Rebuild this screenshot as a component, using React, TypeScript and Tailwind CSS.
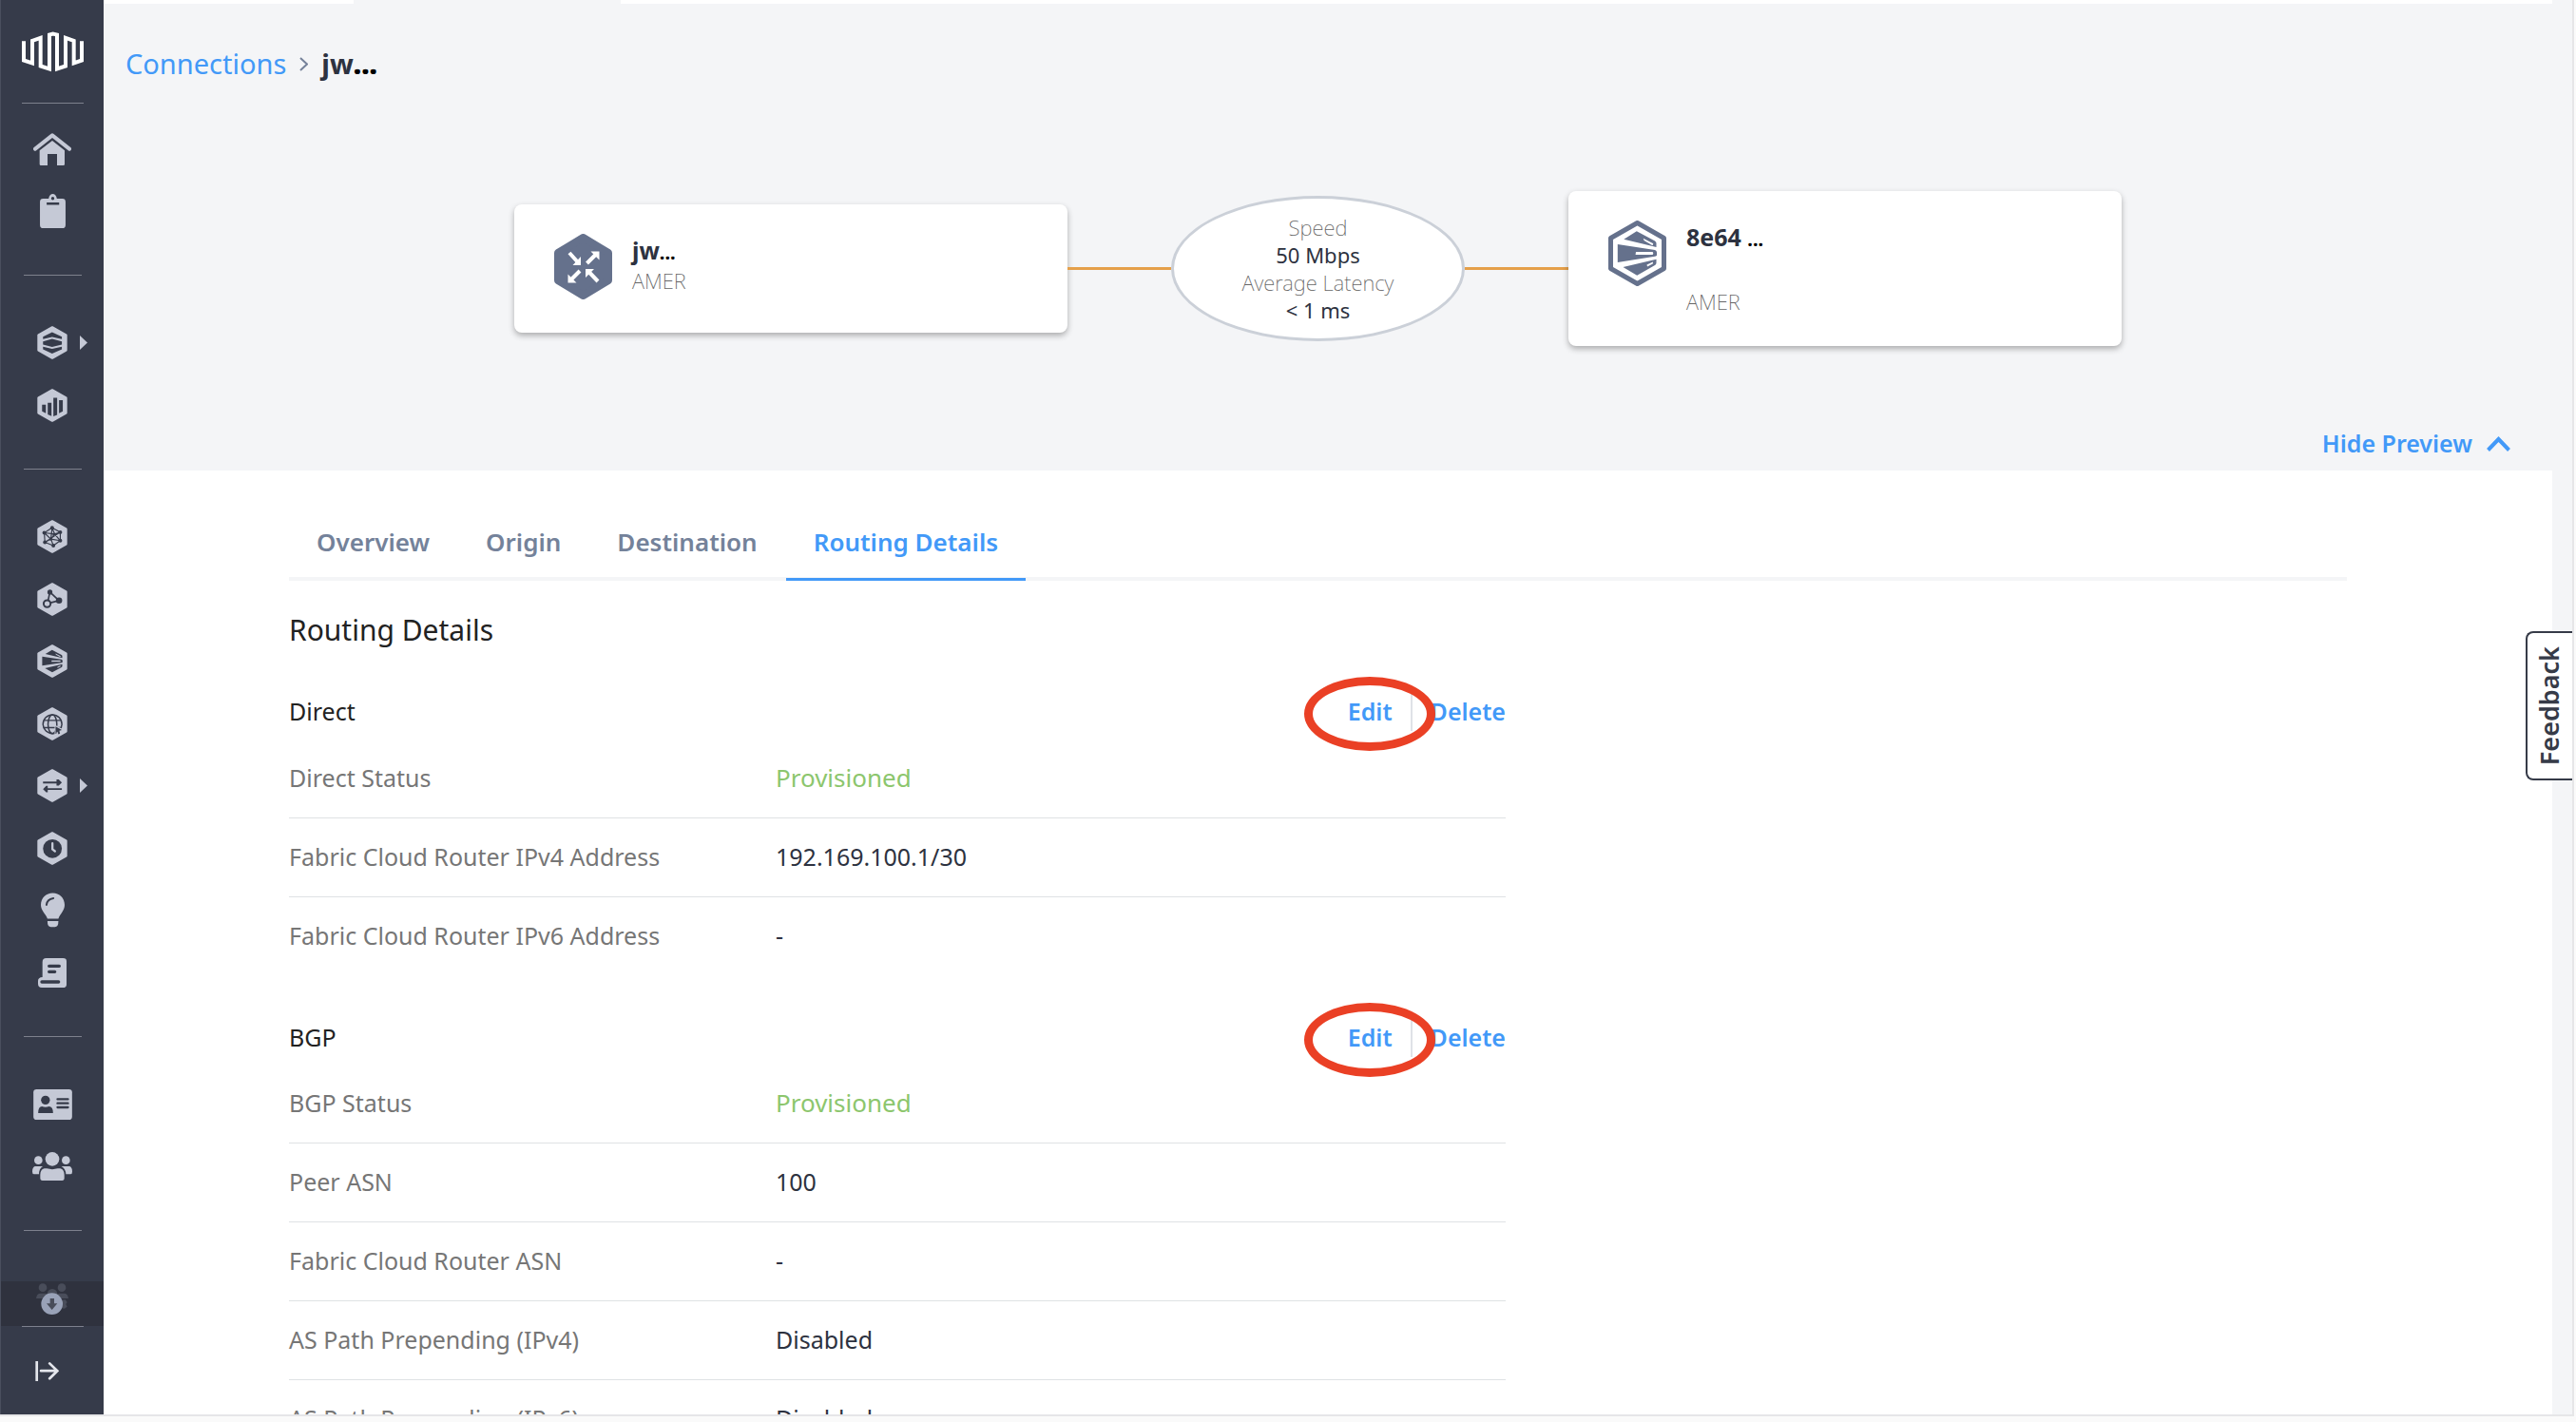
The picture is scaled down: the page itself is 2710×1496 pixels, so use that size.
import { useState } from "react";
import type { ReactNode } from "react";

interface DetailRow {
  label: string;
  value: string;
  success?: boolean;
}

interface DetailSectionProps {
  title: string;
  rows: DetailRow[];
}

interface NavItem {
  label: string;
  icon: ReactNode;
  hasMenu?: boolean;
}

const TABS = ["Overview", "Origin", "Destination", "Routing Details"];

const DIRECT_ROWS: DetailRow[] = [
  { label: "Direct Status", value: "Provisioned", success: true },
  { label: "Fabric Cloud Router IPv4 Address", value: "192.169.100.1/30" },
  { label: "Fabric Cloud Router IPv6 Address", value: "-" },
];

const BGP_ROWS: DetailRow[] = [
  { label: "BGP Status", value: "Provisioned", success: true },
  { label: "Peer ASN", value: "100" },
  { label: "Fabric Cloud Router ASN", value: "-" },
  { label: "AS Path Prepending (IPv4)", value: "Disabled" },
  { label: "AS Path Prepending (IPv6)", value: "Disabled" },
];

function Logo() {
  return (
    <svg viewBox="0 0 195 128" className="w-[65px] h-[43px]" fill="none" stroke="#fff" strokeWidth="12">
      <path d="M6 30V91L33 100V29L59 20V109L87 118V10L98 7L111 10V118L138 109V20L164 29V100L189 91V30" />
    </svg>
  );
}

// Light hexagon with a dark symbol cut into it
function HexIcon({ children }: { children: ReactNode }) {
  return (
    <svg viewBox="0 0 95 106" className="w-8 h-[35px]" fill="#363b4a" stroke="none">
      <polygon
        points="47.5,4 91.5,29 91.5,77 47.5,102 3.5,77 3.5,29"
        fill="#c5c9d6"
        stroke="#c5c9d6"
        strokeWidth="7"
        strokeLinejoin="round"
      />
      {children}
    </svg>
  );
}

function EdgeShapes() {
  return (
    <path
      fillRule="evenodd"
      d="M16.3 19.7L29.8 11.3L49 21.5Q50.5 22.5 50.5 24V28ZM36.7 18.7L37.6 21L46.5 26.3L47.3 24.3ZM9.8 25L49 31Q51 31.5 51 33.5V36.5Q51 37.5 49 37.8L9.8 44ZM29 33L28.6 36H46.5Q48 34.5 46.5 33ZM15.5 49L50.5 40.7V44.5Q50.5 46 49 47L30.2 57.7ZM40.5 46.5L41 48.6L46.8 45.6L47 43.4Z"
    />
  );
}

const HOME = (
  <svg viewBox="0 0 120 102" className="w-10 h-[34px]" fill="#c5c9d6">
    <path d="M6 50L60 7L114 50" fill="none" stroke="#c5c9d6" strokeWidth="12" strokeLinecap="round" strokeLinejoin="round" />
    <path d="M20 55L60 24L99 55V98Q99 102 95 102H75V66H45V102H24Q20 102 20 98Z" />
  </svg>
);

const CLIPBOARD = (
  <svg viewBox="0 0 80 107" className="w-[27px] h-9" fill="#c5c9d6">
    <path
      fillRule="evenodd"
      d="M10 15H27C29 5 34 0 40 0S51 5 53 15H70Q80 15 80 25V97Q80 107 70 107H10Q0 107 0 97V25Q0 15 10 15ZM35 14A5 5 0 1 0 45 14A5 5 0 1 0 35 14ZM21 27V34H60V27Z"
    />
  </svg>
);

const BULB = (
  <svg viewBox="0 0 76 110" className="w-[25px] h-[37px]" fill="#c5c9d6">
    <path d="M38 0C59 0 76 16 76 38C76 56 62 66 56 82H21C15 66 0 56 0 38C0 16 17 0 38 0Z" />
    <path d="M21 90H56Q56 109 45 109H32Q21 109 21 90Z" />
    <path d="M18 38Q20 20 40 17" fill="none" stroke="#363b4a" strokeWidth="6" strokeLinecap="round" />
  </svg>
);

const SCROLL = (
  <svg viewBox="0 0 90 93" className="w-[30px] h-[31px]" fill="#c5c9d6">
    <path d="M26 0H79Q90 0 90 10V83Q90 93 78 93H12Q0 93 0 80V72Q0 61 14 60V12Q14 0 26 0Z" />
    <path d="M35 25H67M35 43H53M12 75H65" fill="none" stroke="#363b4a" strokeWidth="10" strokeLinecap="round" />
  </svg>
);

const ID_CARD = (
  <svg viewBox="0 0 122 96" className="w-[41px] h-8" fill="#363b4a">
    <rect width="122" height="96" rx="10" fill="#c5c9d6" />
    <circle cx="38" cy="34" r="14" />
    <path d="M15 75Q15 54 27 54Q38 59 49 54Q62 54 62 75Z" />
    <path d="M76 31H109M76 44H109M76 57H109" stroke="#363b4a" strokeWidth="7" strokeLinecap="round" />
  </svg>
);

const USERS = (
  <svg viewBox="0 0 126 90" className="w-[42px] h-[30px]" fill="#c5c9d6">
    <circle cx="63" cy="22" r="22" />
    <circle cx="19" cy="26" r="13" />
    <circle cx="106" cy="26" r="13" />
    <path d="M38 52H46Q63 57 80 52H88Q101 55 101 72V82Q101 90 94 90H32Q25 90 25 82V72Q25 55 38 52Z" />
    <path d="M8 45H33Q21 52 21 70H6Q0 70 0 62Q0 48 8 45Z" />
    <path d="M118 45H92Q105 52 106 70H120Q126 70 126 62Q126 48 118 45Z" />
  </svg>
);

const NAV_GROUPS: { className: string; items: NavItem[] }[] = [
  {
    className: "h-[131px] mt-[15px]",
    items: [
      { label: "Home", icon: HOME },
      { label: "Orders", icon: CLIPBOARD },
    ],
  },
  {
    className: "h-[131px] mt-[38px]",
    items: [
      {
        label: "Data centers",
        hasMenu: true,
        icon: (
          <HexIcon>
            <path d="M18 34L47 20L78 34V42L47 35L18 42ZM18 49L47 41L78 49V59L47 67L18 59ZM18 66L47 73L78 66V74L47 88L18 74Z" />
          </HexIcon>
        ),
      },
      {
        label: "Insights",
        icon: (
          <HexIcon>
            <path d="M15 51H27V78L15 72ZM33 45H45V87L33 82ZM51 29H63V83L51 88ZM69 36H81V72L69 78Z" />
          </HexIcon>
        ),
      },
    ],
  },
  {
    className: "h-[524px] mt-[38px]",
    items: [
      {
        label: "Fabric",
        icon: (
          <HexIcon>
            <path
              d="M47 25L73 39V66L51 82L24 71L22 41ZM22 41L55 45L73 39M47 25L55 45L73 66L43 61L22 41M55 45L43 61L24 71M43 61L51 82M47 25L43 61M24 71L73 39"
              fill="none"
              stroke="#363b4a"
              strokeWidth="3.5"
            />
            <circle cx="47" cy="25" r="6" />
            <circle cx="73" cy="39" r="6" />
            <circle cx="73" cy="66" r="6" />
            <circle cx="51" cy="82" r="6" />
            <circle cx="24" cy="71" r="6" />
            <circle cx="22" cy="41" r="6" />
            <circle cx="54" cy="46" r="5" />
            <circle cx="43" cy="61" r="5" />
          </HexIcon>
        ),
      },
      {
        label: "Connections",
        icon: (
          <HexIcon>
            <path d="M40 30L34 57M40 30L69 57L42 64" fill="none" stroke="#363b4a" strokeWidth="5" />
            <circle cx="40" cy="30" r="8" />
            <circle cx="69" cy="57" r="10" />
            <circle cx="31" cy="67" r="11" fill="#c5c9d6" stroke="#363b4a" strokeWidth="6" />
          </HexIcon>
        ),
      },
      {
        label: "Network Edge",
        icon: (
          <HexIcon>
            <g transform="scale(1.57 1.54)">
              <EdgeShapes />
            </g>
          </HexIcon>
        ),
      },
      {
        label: "Internet Access",
        icon: (
          <HexIcon>
            <g fill="none" stroke="#363b4a" strokeWidth="4.5">
              <circle cx="48" cy="54" r="30" />
              <ellipse cx="48" cy="54" rx="14" ry="30" />
              <path d="M20 42H76M20 65H76" />
            </g>
            <path d="M55 56L81 70L73 74L77 86L66 89L61 80L55 86Z" fill="#c5c9d6" />
            <path d="M58 61L78 73L70 75L72 84L67 86L64 78L58 83Z" />
          </HexIcon>
        ),
      },
      {
        label: "Transfers",
        hasMenu: true,
        icon: (
          <HexIcon>
            <path d="M18 40H61V33H68L78 43L68 53H61V46H18ZM78 61H33V54H28L18 64L28 74H33V67H78Z" />
          </HexIcon>
        ),
      },
      {
        label: "Time",
        icon: (
          <HexIcon>
            <circle cx="48" cy="54" r="30" />
            <path d="M48 37V56L56 62" fill="none" stroke="#c5c9d6" strokeWidth="7" strokeLinecap="round" />
          </HexIcon>
        ),
      },
      { label: "Ideas", icon: BULB },
      { label: "Reports", icon: SCROLL },
    ],
  },
  {
    className: "h-[131px] mt-[38px]",
    items: [
      { label: "Account", icon: ID_CARD },
      { label: "Users", icon: USERS },
    ],
  },
];

function Sidebar() {
  return (
    <aside className="w-[109px] shrink-0 flex flex-col items-center bg-[#363b4a] border-l border-[#4a4f5e] overflow-hidden">
      <div className="h-[108px] w-full shrink-0 flex items-center justify-center">
        <Logo />
      </div>
      <hr className="w-[65px] border-[#7e818d]" />
      {NAV_GROUPS.map((group, index) => (
        <div key={index} className="w-full shrink-0 flex flex-col items-center">
          <nav className={"w-full grid auto-rows-fr " + group.className}>
            {group.items.map((item) => (
              <button key={item.label} type="button" aria-label={item.label} className="relative flex items-center justify-center">
                {item.icon}
                {item.hasMenu && (
                  <svg viewBox="0 0 8 15" className="absolute left-[83px] w-2 h-[15px]" fill="#c5c9d6">
                    <path d="M0 0L8 7.5L0 15Z" />
                  </svg>
                )}
              </button>
            ))}
          </nav>
          <hr className="w-[61px] mt-[34px] border-[#7e818d]" />
        </div>
      ))}
      <div className="mt-auto w-full shrink-0 flex flex-col items-center">
        <button type="button" aria-label="Scroll down" className="w-full h-[47px] flex justify-center bg-[#2f323e]">
          <svg viewBox="0 0 102 141" className="w-[34px] h-[47px]">
            <g fill="#494d5a">
              <circle cx="21" cy="20" r="13" />
              <circle cx="81" cy="20" r="13" />
              <circle cx="51" cy="40" r="16" />
              <path d="M0 54Q2 38 14 38H30Q38 42 32 54ZM102 54Q100 38 88 38H72Q64 42 70 54Z" />
              <path d="M76 60L92 58L98 66L94 72L98 80L90 86L76 84Z" />
            </g>
            <circle cx="50" cy="71" r="34" fill="#99a2b8" />
            <path d="M44 54H57V70H67L50 90L33 70H44Z" fill="#494d5a" />
          </svg>
        </button>
        <hr className="w-[65px] border-[#7e818d]" />
        <button type="button" aria-label="Expand menu" className="h-[92px] w-full flex items-center pl-9">
          <svg viewBox="0 0 74 62" className="w-[25px] h-[21px]" fill="none" stroke="#e4e6ec" strokeWidth="8">
            <path d="M5 0V62" />
            <path d="M18 30H68M45 7L69 30L45 54" strokeLinecap="round" />
          </svg>
        </button>
      </div>
    </aside>
  );
}

function DetailSection({ title, rows }: DetailSectionProps) {
  return (
    <section className="mt-[45px] max-w-7xl">
      <div className="flex items-center justify-between h-10 mb-2">
        <h3 className="text-[25px] text-[#222]">{title}</h3>
        <div className="flex items-center font-semibold text-[25px] text-[#4299f8]">
          <div className="relative">
            <button type="button">Edit</button>
            <span className="absolute z-10 -left-[46px] -top-[18px] w-[138px] h-[78px] rounded-[50%] border-[9px] border-[#ea4025] pointer-events-none"></span>
          </div>
          <span className="w-0.5 h-10 mx-[19px] bg-[#dfe2e7]"></span>
          <button type="button">Delete</button>
        </div>
      </div>
      <table className="w-full table-fixed text-[25px] text-left">
        <tbody>
          {rows.map((row) => (
            <tr key={row.label} className="h-[83px] border-b border-[#dfe2e4] last:border-transparent">
              <th scope="row" className="w-2/5 font-normal text-[#767676]">
                {row.label}
              </th>
              <td className={row.success ? "text-[26px] text-[#8cc66d]" : "text-[#2d3240]"}>{row.value}</td>
            </tr>
          ))}
        </tbody>
      </table>
    </section>
  );
}

export default function App() {
  const [activeTab, setActiveTab] = useState("Routing Details");
  const [showPreview, setShowPreview] = useState(true);

  return (
    <div className="h-screen flex flex-col pr-0.5 bg-[#fafafa] font-['Noto_Sans',sans-serif]">
      <div className="relative flex-1 min-h-0 flex border-r-2 border-b-2 border-[#e6e6e8] bg-[#f4f5f7]">
        <Sidebar />

        <main className="flex-1 min-w-0 flex flex-col mr-[21px] overflow-hidden">
          <div className="flex justify-between h-1 shrink-0">
            <span className="w-[263px] bg-white"></span>
            <span className="w-[2032px] bg-white"></span>
          </div>

          <header className="h-[491px] shrink-0 flex flex-col pr-[21px]">
            <nav className="flex items-center h-[126px] px-[23px] text-[29px]">
              <a href="#connections" className="text-[#4299f8]">
                Connections
              </a>
              <svg viewBox="0 0 9 15" className="w-[9px] h-[15px] mx-[14px]" fill="none" stroke="#76829a" strokeWidth="2">
                <path d="M1 1L8 7.5L1 14" />
              </svg>
              <span className="font-bold text-[#2d3240]">
                jw<span className="font-black text-black">...</span>
              </span>
            </nav>

            {showPreview && (
              <div className="flex items-center justify-center h-[305px]">
                <div className="w-[582px] h-[135px] flex gap-[21px] px-[42px] pt-[31px] bg-white rounded-lg shadow-[0_3px_6px_rgba(0,0,0,0.3)]">
                  <svg viewBox="0 0 61 69" className="w-[61px] h-[69px]" fill="#fff" stroke="#fff">
                    <polygon
                      points="30.5,4 57,20 57,49 30.5,65 4,49 4,20"
                      fill="#65718c"
                      stroke="#65718c"
                      strokeWidth="8"
                      strokeLinejoin="round"
                    />
                    <g strokeWidth="4">
                      <path d="M16 20L25 30M34.5 31L44 21.5M27 39L18 48M46 50L36 39.5" />
                    </g>
                    <g stroke="none">
                      <path d="M28 24V33H19.5ZM38.5 18.5H47.5V27.5ZM14.5 42.5V51.5H23.5ZM33 37H42L33 46Z" />
                    </g>
                  </svg>
                  <div className="flex flex-col gap-0.5 pt-0.5 text-[22px] leading-[30px]">
                    <h4 className="text-[25px] leading-[30px] font-bold text-[#2d3240]">
                      jw<span className="text-xl leading-none text-black">...</span>
                    </h4>
                    <span className="font-extralight text-[#666]">AMER</span>
                  </div>
                </div>

                <span className="w-[109px] h-[3px] bg-[#e5a04a]"></span>
                <div className="w-[309px] h-[153px] flex flex-col items-center justify-center rounded-[50%] border-[3px] border-[#cbd0d8] bg-white text-[22px] leading-[29px] text-[#2d3240]">
                  <span className="font-extralight text-[#666]">Speed</span>
                  <span>50 Mbps</span>
                  <span className="font-extralight text-[#666]">Average Latency</span>
                  <span>&lt; 1 ms</span>
                </div>
                <span className="w-[109px] h-[3px] bg-[#e5a04a]"></span>

                <div className="w-[582px] h-[163px] flex gap-[21px] px-[42px] pt-[31px] bg-white rounded-lg shadow-[0_3px_6px_rgba(0,0,0,0.3)]">
                  <svg viewBox="0 0 61 69" className="w-[61px] h-[69px]" fill="#65718c">
                    <polygon
                      points="30.5,2.5 58.5,18.5 58.5,50.5 30.5,66.5 2.5,50.5 2.5,18.5"
                      fill="none"
                      stroke="#65718c"
                      strokeWidth="5"
                      strokeLinejoin="round"
                    />
                    <EdgeShapes />
                  </svg>
                  <div className="flex flex-col gap-[38px] pt-0.5 text-[22px] leading-[30px]">
                    <h4 className="text-[25px] leading-[30px] font-bold text-[#2d3240]">
                      8e64 <span className="text-xl leading-none text-black">...</span>
                    </h4>
                    <span className="font-extralight text-[#666]">AMER</span>
                  </div>
                </div>
              </div>
            )}

            <button
              type="button"
              onClick={() => setShowPreview(!showPreview)}
              className="self-end mt-auto mr-[23px] mb-2 h-10 flex items-center gap-[15px] text-[25px] font-semibold text-[#4299f8]"
            >
              Hide Preview
              <svg viewBox="0 0 25 16" className="w-[25px] h-4" fill="none" stroke="#4299f8" strokeWidth="4">
                <path d="M1.5 14.5L12.5 3L23.5 14.5" />
              </svg>
            </button>
          </header>

          <div className="flex-1 min-h-0 bg-white pl-[195px] pr-[216px] pt-[57px]">
            <div role="tablist" className="flex gap-px shadow-[inset_0_-4px_0_#f4f5f7]">
              {TABS.map((tab) => (
                <button
                  key={tab}
                  type="button"
                  role="tab"
                  aria-selected={tab === activeTab}
                  onClick={() => setActiveTab(tab)}
                  className={
                    "px-[29px] pb-5 border-b-[3px] text-[26px] leading-9 font-semibold " +
                    (tab === activeTab ? "border-[#4299f8] text-[#4299f8]" : "border-transparent text-[#74829a]")
                  }
                >
                  {tab}
                </button>
              ))}
            </div>

            <h2 className="mt-[31px] text-[30px] leading-[42px] text-[#222]">Routing Details</h2>
            <DetailSection title="Direct" rows={DIRECT_ROWS} />
            <DetailSection title="BGP" rows={BGP_ROWS} />
          </div>
        </main>

        <button
          type="button"
          className="absolute right-0 top-[664px] w-[49px] h-[157px] flex items-center justify-center rounded-l-lg border-2 border-r-0 border-[#363b48] bg-white text-[27px] font-semibold text-[#363b48]"
        >
          <span className="[writing-mode:vertical-rl] rotate-180">Feedback</span>
        </button>
      </div>
      <div className="h-1.5 shrink-0"></div>
    </div>
  );
}
